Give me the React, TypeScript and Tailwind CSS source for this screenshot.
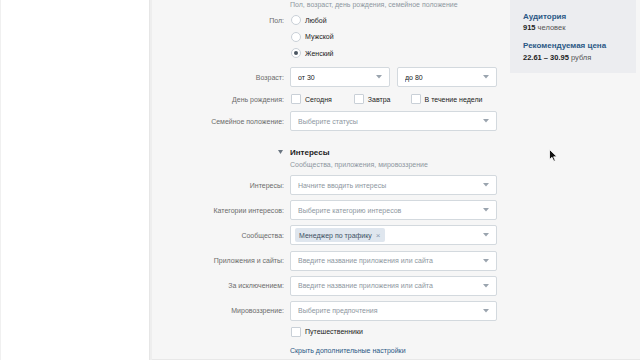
import React from 'react'

const font = { fontFamily: '"Liberation Sans", Arial, sans-serif' }

function Chevron() {
    return (
        <svg width="6" height="4" viewBox="0 0 6 4" className="shrink-0">
            <path d="M0 0 L6 0 L3 3.5 Z" fill="#9aa4ae" />
        </svg>
    )
}

function Select({ text, dark, w = 'w-[207px]', children }: { text?: string; dark?: boolean; w?: string; children?: React.ReactNode }) {
    return (
        <div className={`${w} h-[20px] bg-white border border-[#d3d9de] rounded-[2px] flex items-center pl-[7px] pr-[7px]`}>
            {children ?? <span className={`flex-1 truncate ${dark ? 'text-[#222]' : 'text-[#8d96a0]'}`}>{text}</span>}
            {children && <span className="flex-1" />}
            <Chevron />
        </div>
    )
}

function Row({ label, className = '', children }: { label?: string; className?: string; children?: React.ReactNode }) {
    return (
        <div className={`flex items-center ${className}`}>
            <div className="w-[138px] pr-[6px] text-right text-[#6b6b6b] shrink-0 whitespace-nowrap">{label}</div>
            <div className="flex items-center">{children}</div>
        </div>
    )
}

function Radio({ checked, text }: { checked?: boolean; text: string }) {
    return (
        <div className="flex items-center">
            <span className="w-[10px] h-[10px] rounded-full border border-[#c9d0d7] bg-white flex items-center justify-center ml-[1px]">
                {checked && <span className="w-[4px] h-[4px] rounded-full bg-[#4a5560]" />}
            </span>
            <span className="ml-[4px] text-[#222]">{text}</span>
        </div>
    )
}

function Check({ text, className = '' }: { text: string; className?: string }) {
    return (
        <div className={`flex items-center ${className}`}>
            <span className="w-[10px] h-[10px] rounded-[1px] border border-[#c9d0d7] bg-white ml-[1px]" />
            <span className="ml-[4px] text-[#222]">{text}</span>
        </div>
    )
}

export default function App() {
    return (
        <div className="relative w-[640px] h-[360px] flex overflow-hidden text-[7px] leading-[9px]" style={font}>
            <div className="w-[150px] h-full bg-white border-l border-[#f0f0f0] border-r border-r-[#e6e6e6]" />
            <div className="w-[2px] h-full bg-[#eeeeee]" />
            <div className="flex-1 h-full bg-[#f6f6f6] flex border-b border-[#e8e8e8]">
                <div className="w-[358px] flex flex-col">
                    <Row className="h-[9px]">
                        <span className="text-[#8d96a0] whitespace-nowrap">Пол, возраст, день рождения, семейное положение</span>
                    </Row>
                    <Row label="Пол:" className="h-[16.5px] mt-[3px]">
                        <Radio text="Любой" />
                    </Row>
                    <Row className="h-[16.5px]">
                        <Radio text="Мужской" />
                    </Row>
                    <Row className="h-[16.5px]">
                        <Radio checked text="Женский" />
                    </Row>
                    <Row label="Возраст:" className="h-[20px] mt-[5.5px]">
                        <Select text="от 30" dark w="w-[100px]" />
                        <div className="w-[7px]" />
                        <Select text="до 80" dark w="w-[100px]" />
                    </Row>
                    <Row label="День рождения:" className="h-[16px] mt-[4px]">
                        <Check text="Сегодня" />
                        <Check text="Завтра" className="ml-[21px]" />
                        <Check text="В течение недели" className="ml-[19px]" />
                    </Row>
                    <Row label="Семейное положение:" className="h-[20px] mt-[4px]">
                        <Select text="Выберите статусы" />
                    </Row>
                    <div className="h-[12px] mt-[15px] flex items-center">
                        <div className="w-[138px] pr-[7px] flex justify-end">
                            <svg width="5" height="4" viewBox="0 0 5 4"><path d="M0 0 L5 0 L2.5 4 Z" fill="#6b7682" /></svg>
                        </div>
                        <span className="font-bold text-[8px] text-[#222]">Интересы</span>
                    </div>
                    <Row className="h-[10px] mt-[1px]">
                        <span className="text-[#8d96a0] whitespace-nowrap">Сообщества, приложения, мировоззрение</span>
                    </Row>
                    <div className="flex flex-col gap-[5.2px] mt-[6px]">
                        <Row label="Интересы:" className="h-[20px]">
                            <Select text="Начните вводить интересы" />
                        </Row>
                        <Row label="Категории интересов:" className="h-[20px]">
                            <Select text="Выберите категорию интересов" />
                        </Row>
                        <Row label="Сообщества:" className="h-[20px]">
                            <Select>
                                <span className="-ml-[3px] h-[14px] bg-[#dfe6ee] rounded-[2px] flex items-center px-[4px] text-[#3d4f63] whitespace-nowrap">
                                    Менеджер по трафику
                                    <span className="ml-[4px] text-[#8a9bb0] text-[8px]">×</span>
                                </span>
                            </Select>
                        </Row>
                        <Row label="Приложения и сайты:" className="h-[20px]">
                            <Select text="Введите название приложения или сайта" />
                        </Row>
                        <Row label="За исключением:" className="h-[20px]">
                            <Select text="Введите название приложения или сайта" />
                        </Row>
                        <Row label="Мировоззрение:" className="h-[20px]">
                            <Select text="Выберите предпочтения" />
                        </Row>
                    </div>
                    <Row className="h-[16px] mt-[3px]">
                        <Check text="Путешественники" />
                    </Row>
                    <Row className="h-[12px] mt-[5px]">
                        <span className="text-[#2a5885] whitespace-nowrap">Скрыть дополнительные настройки</span>
                    </Row>
                </div>
                <div className="w-[126px] h-[73px] bg-[#ecedf0] pl-[13px] pt-[12px] flex flex-col">
                    <span className="font-bold text-[8px] leading-[10px] text-[#2a5885]">Аудитория</span>
                    <span className="text-[7.5px] leading-[10px] text-[#222] mt-[1px]"><b>915</b> <span className="text-[#555]">человек</span></span>
                    <span className="font-bold text-[8px] leading-[10px] text-[#2a5885] mt-[8px]">Рекомендуемая цена</span>
                    <span className="text-[7.5px] leading-[10px] text-[#222] mt-[2px]"><b>22.61 – 30.95</b> <span className="text-[#555]">рубля</span></span>
                </div>
            </div>
            <svg className="absolute left-[549px] top-[149px]" width="9" height="13" viewBox="0 0 9 13">
                <path d="M0.5 0.5 L0.5 10.5 L3 8.3 L4.8 12.3 L6.3 11.6 L4.6 7.8 L8 7.8 Z" fill="#111" stroke="#fff" strokeWidth="0.8" />
            </svg>
        </div>
    )
}
